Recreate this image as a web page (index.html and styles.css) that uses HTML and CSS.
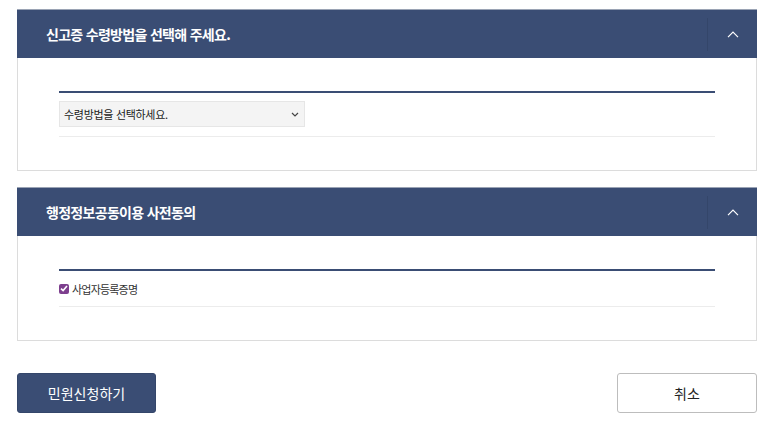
FILE: index.html
```html
<!DOCTYPE html>
<html lang="ko">
<head>
<meta charset="utf-8">
<link rel="stylesheet" href="styles.css">
</head>
<body>
<div class="page">
  <section class="panel">
    <div class="panel-head">
      <h2 class="panel-title">신고증 수령방법을 선택해 주세요.</h2>
      <div class="panel-toggle">
        <svg width="12" height="7" viewBox="0 0 12 7"><path d="M1 6.2 L6 1.2 L11 6.2" fill="none" stroke="#fff" stroke-width="1.2"/></svg>
      </div>
    </div>
    <div class="panel-body">
      <div class="field-row">
        <div class="select">
          <span>수령방법을 선택하세요.</span>
          <svg width="8" height="5" viewBox="0 0 8 5"><path d="M1 1 L4 4 L7 1" fill="none" stroke="#444" stroke-width="1.2"/></svg>
        </div>
      </div>
    </div>
  </section>

  <section class="panel">
    <div class="panel-head">
      <h2 class="panel-title">행정정보공동이용 사전동의</h2>
      <div class="panel-toggle">
        <svg width="12" height="7" viewBox="0 0 12 7"><path d="M1 6.2 L6 1.2 L11 6.2" fill="none" stroke="#fff" stroke-width="1.2"/></svg>
      </div>
    </div>
    <div class="panel-body">
      <div class="field-row check-row">
        <label class="check">
          <span class="check-box">
            <svg width="8" height="7" viewBox="0 0 8 7"><path d="M1 3.6 L3.1 5.6 L7 1" fill="none" stroke="#fff" stroke-width="1.6"/></svg>
          </span>
          <span class="check-label">사업자등록증명</span>
        </label>
      </div>
    </div>
  </section>

  <div class="actions">
    <button class="btn btn-primary">민원신청하기</button>
    <button class="btn btn-default">취소</button>
  </div>
</div>
</body>
</html>
```

FILE: styles.css
```css
* { box-sizing: border-box; }
html, body { margin: 0; padding: 0; background: #fff; }
body {
  font-family: "Noto Sans CJK KR", "Noto Sans", sans-serif;
  color: #222;
}
.page {
  width: 773px;
  padding: 9px 16px 0 17px;
}
.panel {
  border: 1px solid #dcdcdc;
  border-top: 0;
  margin-bottom: 16px;
  background: #fff;
}
.panel-head {
  height: 49px;
  background: #3a4d74;
  border-top: 1px solid #9aa3b4;
  margin: 0 -1px;
  display: flex;
  align-items: center;
  justify-content: space-between;
}
.panel-title {
  margin: -1px 0 0 29px;
  font-size: 14px;
  font-weight: 700;
  color: #fff;
  letter-spacing: -0.7px;
}
.panel-toggle {
  width: 50px;
  height: 33px;
  border-left: 1px solid #34466a;
  display: flex;
  align-items: center;
  justify-content: center;
  padding-left: 1px;
}
.panel-toggle svg { display: block; }
.panel-body {
  padding: 33px 41px;
}
.field-row {
  border-top: 2px solid #3a4d74;
  border-bottom: 1px solid #ececec;
  padding: 8px 0 9px;
}
.select {
  width: 246px;
  height: 26px;
  background: #f4f4f4;
  border: 1px solid #e6e6e6;
  display: flex;
  align-items: center;
  justify-content: space-between;
  padding: 0 4px;
  font-size: 11px;
  color: #222;
  letter-spacing: -0.3px;
}
.select svg { display: block; margin-right: 1px; }
.check-row {
  height: 38px;
  padding: 0;
  display: flex;
  align-items: center;
}
.check {
  display: flex;
  align-items: center;
  gap: 3px;
}
.check-box {
  width: 10px;
  height: 10px;
  border-radius: 2px;
  background: #7d3f8e;
  display: flex;
  align-items: center;
  justify-content: center;
}
.check-box svg { display: block; }
.check-label {
  font-size: 11px;
  color: #333;
  letter-spacing: -0.8px;
}
.actions {
  display: flex;
  justify-content: space-between;
  padding-top: 16px;
}
.btn {
  height: 40px;
  border-radius: 3px;
  font-family: "Noto Sans CJK KR", "Noto Sans", sans-serif;
  font-size: 14px;
  cursor: pointer;
}
.btn-primary {
  width: 139px;
  background: #3a4d74;
  border: 1px solid #34466a;
  color: #fff;
}
.btn-default {
  width: 140px;
  background: #fff;
  border: 1px solid #bdbdbd;
  color: #222;
}
```
